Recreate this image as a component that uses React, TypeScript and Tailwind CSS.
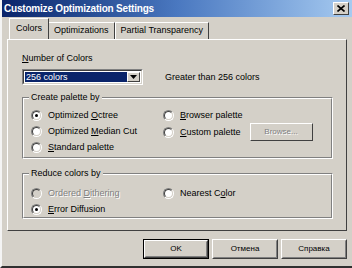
import React from "react";

const font = { fontFamily: '"Liberation Sans", Arial, sans-serif' };

function Radio({ checked, disabled, label, u }: { checked?: boolean; disabled?: boolean; label: string; u: number }) {
  return (
    <div className="flex items-center h-[16px]">
      <div className="relative w-[11px] h-[11px] rounded-full border border-t-[#808080] border-l-[#808080] border-r-white border-b-white bg-[#d4d0c8] flex items-center justify-center">
        <div className={`w-[9px] h-[9px] rounded-full border border-t-[#404040] border-l-[#404040] border-r-[#d4d0c8] border-b-[#d4d0c8] ${disabled ? "bg-[#d4d0c8]" : "bg-white"} flex items-center justify-center`}>
          {checked && <div className="w-[3px] h-[3px] rounded-full bg-black" />}
        </div>
      </div>
      <span className={`ml-[6px] text-[9px] leading-[11px] ${disabled ? "text-[#808080] [text-shadow:1px_1px_0_#fff]" : "text-black"}`}>
        {label.slice(0, u)}
        <span className="underline">{label.slice(u, u + 1)}</span>
        {label.slice(u + 1)}
      </span>
    </div>
  );
}

function Group({ title, className, children }: { title: string; className: string; children: React.ReactNode }) {
  return (
    <div className={`relative border border-t-[#808080] border-l-[#808080] border-r-white border-b-white ${className}`}>
      <div className="absolute inset-0 border border-t-white border-l-white border-r-[#808080] border-b-[#808080] pointer-events-none" />
      <div className="absolute -top-[6px] left-[6px] px-[2px] bg-[#d4d0c8] text-[9px] leading-[11px] text-black">{title}</div>
      {children}
    </div>
  );
}

function Btn({ children, def }: { children: React.ReactNode; def?: boolean }) {
  return (
    <div className={`${def ? "border border-black" : ""} w-[66px] h-[20px] flex`}>
      <div className="flex-1 border border-t-white border-l-white border-r-[#404040] border-b-[#404040] flex">
        <div className="flex-1 border border-t-[#d4d0c8] border-l-[#d4d0c8] border-r-[#808080] border-b-[#808080] flex items-center justify-center text-[8px] text-black">
          {children}
        </div>
      </div>
    </div>
  );
}

export default function App() {
  return (
    <div style={font} className="w-[352px] h-[268px] bg-[#d4d0c8] flex flex-col overflow-hidden border-l-2 border-l-[#f4f4f4] border-b-2 border-b-[#303030]">
      {/* title bar */}
      <div className="h-[17px] bg-gradient-to-r from-[#0a246a] via-[#4a78c0] to-[#a6caf0] flex items-center justify-between pl-[2px] pr-[3px]">
        <span className="text-white font-bold text-[10px] leading-[12px] tracking-[-0.2px]">Customize Optimization Settings</span>
        <div className="w-[16px] h-[13px] bg-[#d4d0c8] border border-t-white border-l-white border-r-[#404040] border-b-[#404040] flex items-center justify-center">
          <svg width="8" height="7" viewBox="0 0 8 7">
            <path d="M0.5 0.5 L7.5 6.5 M7.5 0.5 L0.5 6.5" stroke="#000" strokeWidth="1.6" />
          </svg>
        </div>
      </div>

      {/* tabs */}
      <div className="flex items-end h-[21px] pl-[7px] mt-[1px]">
        <div className="relative z-10 h-[21px] px-[6px] -mr-[1px] bg-[#d4d0c8] border-t border-l border-t-white border-l-white border-r border-r-[#404040] flex items-center text-[9px] text-black">
          Colors
        </div>
        <div className="h-[17px] px-[5px] border-t border-l border-t-white border-l-white border-r border-r-[#404040] flex items-center text-[9px] text-black">
          Optimizations
        </div>
        <div className="h-[17px] px-[5px] border-t border-l border-t-white border-l-white border-r border-r-[#404040] flex items-center text-[9px] text-black">
          Partial Transparency
        </div>
      </div>

      {/* panel */}
      <div className="ml-[5px] mr-[5px] h-[192px] border border-t-white border-l-white border-r-[#404040] border-b-[#404040] flex flex-col px-[14px]">
        <div className="mt-[13px] text-[9px] leading-[11px] text-black">
          <span className="underline">N</span>umber of Colors
        </div>
        <div className="mt-[5px] flex items-center">
          <div className="w-[121px] h-[16px] border border-t-[#808080] border-l-[#808080] border-r-white border-b-white flex">
            <div className="flex-1 border border-t-[#404040] border-l-[#404040] border-r-[#d4d0c8] border-b-[#d4d0c8] bg-white flex p-[1px]">
              <div className="flex-1 bg-[#0a246a] text-white text-[9px] leading-[10px] pl-[1px] flex items-center">256 colors</div>
              <div className="w-[13px] bg-[#d4d0c8] border border-t-white border-l-white border-r-[#404040] border-b-[#404040] flex items-center justify-center">
                <svg width="7" height="4" viewBox="0 0 7 4"><path d="M0 0 H7 L3.5 4 Z" fill="#000" /></svg>
              </div>
            </div>
          </div>
          <span className="ml-[22px] text-[9px] leading-[11px] text-black">Greater than 256 colors</span>
        </div>

        <Group title="Create palette by" className="mt-[12px] h-[62px] w-[311px]">
          <div className="flex pl-[8px] pt-[9px]">
            <div className="w-[132px] flex flex-col">
              <Radio checked label="Optimized Octree" u={10} />
              <Radio label="Optimized Median Cut" u={10} />
              <Radio label="Standard palette" u={0} />
            </div>
            <div className="flex flex-col">
              <Radio label="Browser palette" u={0} />
              <div className="flex items-center">
                <Radio label="Custom palette" u={0} />
                <div className="ml-[9px] w-[63px] h-[18px] border border-t-white border-l-white border-r-[#404040] border-b-[#404040] flex items-center justify-center text-[8px] text-[#808080] [text-shadow:1px_1px_0_#fff]">
                  Browse...
                </div>
              </div>
            </div>
          </div>
        </Group>

        <Group title="Reduce colors by" className="mt-[14px] h-[46px] w-[311px]">
          <div className="flex pl-[8px] pt-[11px]">
            <div className="w-[132px] flex flex-col">
              <Radio disabled label="Ordered Dithering" u={8} />
              <Radio checked label="Error Diffusion" u={0} />
            </div>
            <div className="flex flex-col">
              <Radio label="Nearest Color" u={9} />
            </div>
          </div>
        </Group>
      </div>

      {/* buttons */}
      <div className="mt-[8px] flex justify-end gap-[3px] pr-[5px]">
        <Btn def>OK</Btn>
        <Btn>Отмена</Btn>
        <Btn>Справка</Btn>
      </div>
    </div>
  );
}
